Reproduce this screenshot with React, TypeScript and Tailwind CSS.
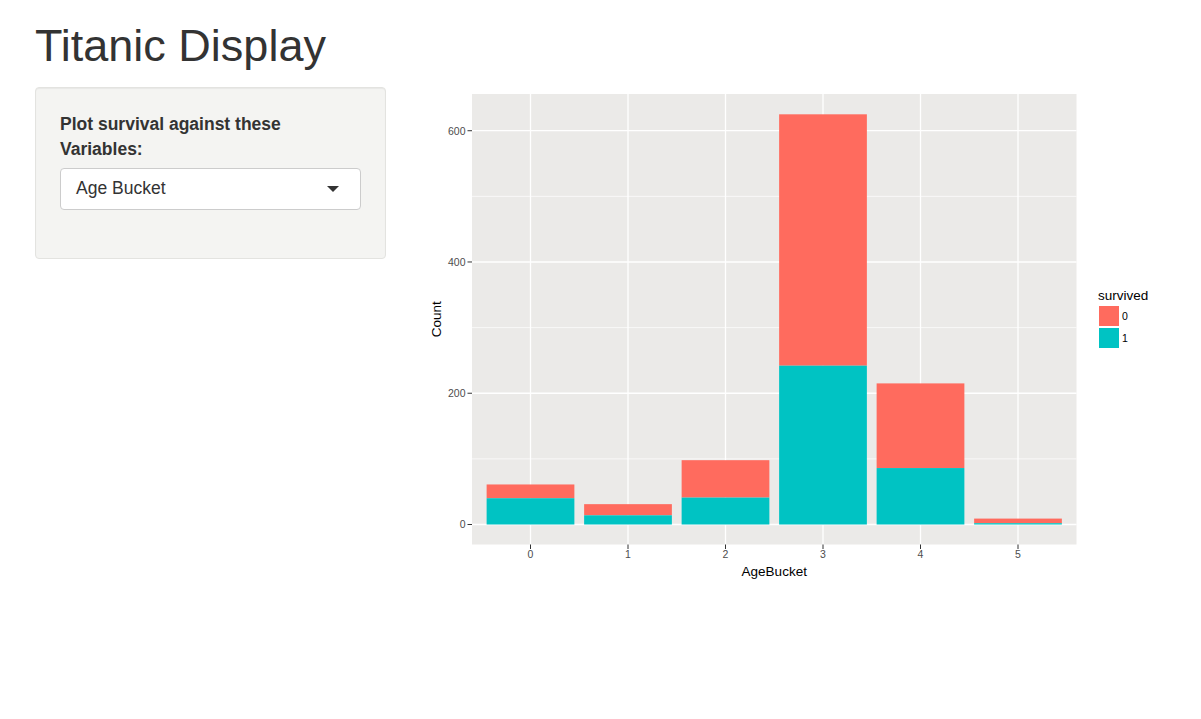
import React from 'react';

const font = { fontFamily: '"Liberation Sans", Arial, Helvetica, sans-serif' };

// counts per age bucket: [total, survived]
const buckets: [number, number][] = [
  [61, 40],
  [31, 14],
  [98, 41],
  [625, 242],
  [215, 86],
  [9, 2],
];

const RED = '#FF6B5E';
const TEAL = '#00C3C3';

const PANEL = { left: 472, right: 1076.5, top: 94, bottom: 544.5 };
const ZERO = 524.5;
const PER_UNIT = 0.6563;
const STEP = (PANEL.right - PANEL.left) / 6.2;

const yOf = (v: number) => ZERO - v * PER_UNIT;
const xOf = (i: number) => PANEL.left + (i + 0.6) * STEP;

const SVG = { x: 405, y: 87, w: 760, h: 510 };

function SurvivalPlot() {
  const barW = STEP * 0.9;
  return (
    <svg
      width={SVG.w}
      height={SVG.h}
      viewBox={`${SVG.x} ${SVG.y} ${SVG.w} ${SVG.h}`}
      className="block shrink-0"
      style={font}
    >
      <rect x={PANEL.left} y={PANEL.top} width={PANEL.right - PANEL.left} height={PANEL.bottom - PANEL.top} fill="#EBEAE8" />

      {/* minor grid */}
      {[100, 300, 500].map(v => (
        <line key={`mn${v}`} x1={PANEL.left} x2={PANEL.right} y1={yOf(v)} y2={yOf(v)} stroke="#fff" strokeWidth={0.7} />
      ))}
      {/* major grid */}
      {[0, 200, 400, 600].map(v => (
        <line key={`mj${v}`} x1={PANEL.left} x2={PANEL.right} y1={yOf(v)} y2={yOf(v)} stroke="#fff" strokeWidth={1.3} />
      ))}
      {buckets.map((_, i) => (
        <line key={`v${i}`} x1={xOf(i)} x2={xOf(i)} y1={PANEL.top} y2={PANEL.bottom} stroke="#fff" strokeWidth={1.3} />
      ))}

      {/* bars */}
      {buckets.map(([total, surv], i) => (
        <g key={`b${i}`}>
          <rect x={xOf(i) - barW / 2} y={yOf(total)} width={barW} height={(total - surv) * PER_UNIT} fill={RED} />
          <rect x={xOf(i) - barW / 2} y={yOf(surv)} width={barW} height={surv * PER_UNIT} fill={TEAL} />
        </g>
      ))}

      {/* y axis */}
      {[0, 200, 400, 600].map(v => (
        <g key={`yt${v}`}>
          <line x1={PANEL.left - 4.5} x2={PANEL.left} y1={yOf(v)} y2={yOf(v)} stroke="#333" strokeWidth={1} />
          <text x={PANEL.left - 6.5} y={yOf(v) + 3.8} textAnchor="end" fontSize={10.5} fill="#4D4D4D">{v}</text>
        </g>
      ))}

      {/* x axis */}
      {buckets.map((_, i) => (
        <g key={`xt${i}`}>
          <line x1={xOf(i)} x2={xOf(i)} y1={PANEL.bottom} y2={PANEL.bottom + 4.5} stroke="#333" strokeWidth={1} />
          <text x={xOf(i)} y={558} textAnchor="middle" fontSize={10.5} fill="#4D4D4D">{i}</text>
        </g>
      ))}

      <text x={(PANEL.left + PANEL.right) / 2} y={575.5} textAnchor="middle" fontSize={13.5} fill="#000">AgeBucket</text>
      <text
        x={441}
        y={(PANEL.top + PANEL.bottom) / 2}
        textAnchor="middle"
        fontSize={13.5}
        fill="#000"
        transform={`rotate(-90 441 ${(PANEL.top + PANEL.bottom) / 2})`}
      >
        Count
      </text>

      {/* legend */}
      <text x={1098} y={300} fontSize={13.5} fill="#000">survived</text>
      <rect x={1099} y={306} width={20} height={20} fill={RED} />
      <rect x={1099} y={328} width={20} height={20} fill={TEAL} />
      <text x={1122} y={320} fontSize={10.5} fill="#000">0</text>
      <text x={1122} y={342} fontSize={10.5} fill="#000">1</text>
    </svg>
  );
}

export default function App() {
  return (
    <div className="min-h-[719px] bg-white text-[#333]" style={font}>
      <div className="px-[35px]">
        <h2 className="pt-[21px] text-[45px] leading-[1.1] font-normal text-[#333]">Titanic Display</h2>

        <div className="mt-[16px] flex items-start">
          <div className="w-[351px] shrink-0 rounded-[4px] border border-[#e3e3e0] bg-[#f4f4f2] px-[24px] pt-[24px] pb-[48px] shadow-[inset_0_1px_1px_rgba(0,0,0,0.05)]">
            <label className="block text-[17.5px] leading-[25px] font-bold text-[#333]">
              Plot survival against these Variables:
            </label>
            <div className="mt-[6px] flex h-[42px] w-[301px] items-center justify-between rounded-[4px] border border-[#cccccc] bg-white pl-[15px] pr-[21px]">
              <span className="text-[17.5px] text-[#333]">Age Bucket</span>
              <svg width="12" height="6" viewBox="0 0 12 6">
                <path d="M0 0 L12 0 L6 6 Z" fill="#333" />
              </svg>
            </div>
          </div>

          <div className="ml-[19px]">
            <SurvivalPlot />
          </div>
        </div>
      </div>
    </div>
  );
}
